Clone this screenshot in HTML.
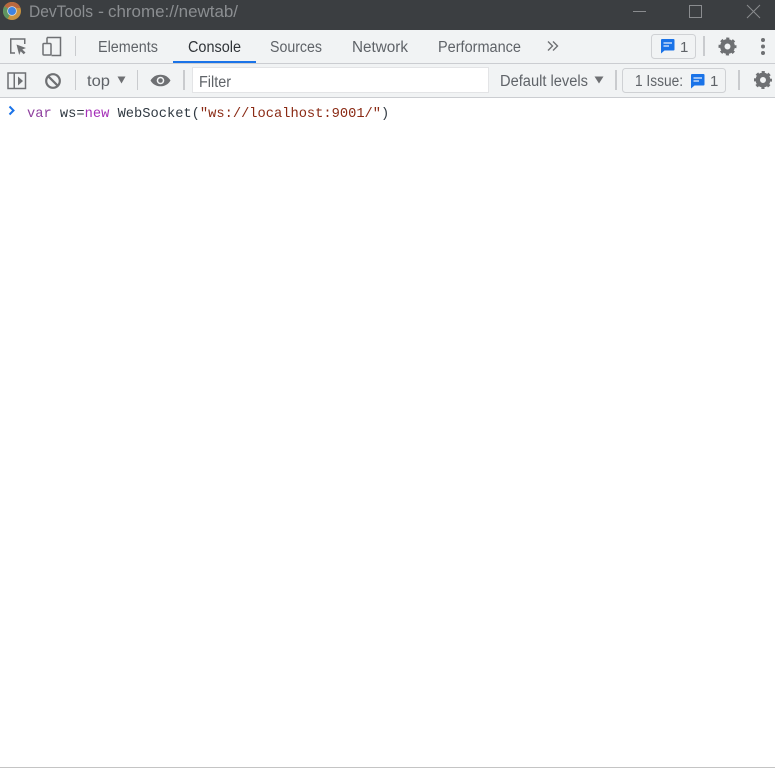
<!DOCTYPE html>
<html>
<head>
<meta charset="utf-8">
<style>
html,body{margin:0;padding:0;background:#fff;width:775px;height:768px;overflow:hidden}
svg{display:block;font-family:"Liberation Sans",sans-serif}
.mono{font-family:"Liberation Mono",monospace;font-size:13.73px}
</style>
</head>
<body>
<svg width="775" height="768" viewBox="0 0 775 768" xmlns="http://www.w3.org/2000/svg">
<defs>
<g id="gear">
<circle r="5.2" fill="none" stroke="#6e7073" stroke-width="4.400"/>
<circle r="7.700" fill="none" stroke="#6e7073" stroke-width="2.600" stroke-dasharray="3.050 3" stroke-dashoffset="1.525"/>
</g>
<g id="msg"><path fill="#1a73e8" d="M1 0h11.500a1 1 0 0 1 1 1v9.500a1 1 0 0 1-1 1H3.500L0 14.500V1a1 1 0 0 1 1-1z"/><path stroke="#c4daf8" stroke-width="1.500" d="M2.500 4h8.500M2.500 7h5.500"/></g>
</defs>

<!-- title bar -->
<rect width="775" height="30" fill="#3b3e41"/>
<circle cx="12" cy="11" r="9" fill="#c9933f"/>
<path d="M12 11L4.500 6.200A9 9 0 0 1 20.500 8H12z" fill="#b9683f"/>
<path d="M12 11L7.500 19A9 9 0 0 1 4.500 6.200z" fill="#5f9460"/>
<circle cx="12" cy="11" r="4.800" fill="#dfe1e3"/>
<circle cx="12" cy="11" r="4" fill="#3f84e0"/>
<g font-size="16.500" fill="#8b8e91">
<text x="29" y="17" textLength="64" lengthAdjust="spacingAndGlyphs">DevTools</text>
<text x="98" y="17" textLength="6" lengthAdjust="spacingAndGlyphs">-</text>
<text x="108" y="17" textLength="130" lengthAdjust="spacingAndGlyphs">chrome://newtab/</text>
</g>
<rect x="633" y="11" width="13" height="1" fill="#8a8c8f"/>
<rect x="689.500" y="5.500" width="12" height="12" fill="none" stroke="#8a8c8f"/>
<path d="M747 5l13 13M760 5l-13 13" stroke="#8a8c8f" stroke-width="1" fill="none"/>

<!-- tab bar -->
<rect y="30" width="775" height="33" fill="#f1f3f4"/>
<rect y="63" width="775" height="1" fill="#cbcdd1"/>
<path d="M15 53h-4.250v-14h14v5" fill="none" stroke="#6e7073" stroke-width="1.500"/>
<path d="M16.500 44.500l9.500 3.500-3.700 1.500 3.200 3-1.800 1.800-3-3-1.500 3.700z" fill="#6e7073"/>
<path d="M47 37.500h13.500v18h-9" fill="none" stroke="#6e7073" stroke-width="1.500"/>
<path d="M47 37.500v6" stroke="#6e7073" stroke-width="1.500"/>
<rect x="43" y="43.500" width="8" height="11.500" rx="1" fill="none" stroke="#6e7073" stroke-width="1.500"/>
<rect x="75" y="36" width="1" height="20" fill="#c9cbce"/>

<g font-size="15.500" fill="#5f6368">
<text x="98" y="52" textLength="60" lengthAdjust="spacingAndGlyphs">Elements</text>
<text x="188" y="52" fill="#303438" textLength="53" lengthAdjust="spacingAndGlyphs">Console</text>
<text x="270" y="52" textLength="52" lengthAdjust="spacingAndGlyphs">Sources</text>
<text x="352" y="52" textLength="56" lengthAdjust="spacingAndGlyphs">Network</text>
<text x="438" y="52" textLength="83" lengthAdjust="spacingAndGlyphs">Performance</text>
</g>
<rect x="173" y="61" width="83" height="2" fill="#1a73e8"/>
<path d="M548 41.500l4.500 4.500-4.500 4.500M553 41.500l4.500 4.500-4.500 4.500" fill="none" stroke="#6e7073" stroke-width="1.400"/>

<rect x="651.500" y="34.500" width="44" height="24" rx="3" fill="#f1f3f4" stroke="#cfd1d4"/>
<use href="#msg" x="661" y="39"/>
<text x="680" y="52" font-size="15" fill="#5f6368">1</text>
<rect x="703" y="36" width="2" height="20" fill="#c9cbce"/>
<use href="#gear" x="727.500" y="46.500"/>
<circle cx="763" cy="40" r="2" fill="#6e7073"/>
<circle cx="763" cy="46.500" r="2" fill="#6e7073"/>
<circle cx="763" cy="53" r="2" fill="#6e7073"/>

<!-- console toolbar -->
<rect y="64" width="775" height="33" fill="#f1f3f4"/>
<rect y="97" width="775" height="1" fill="#cbcdd1"/>
<rect x="8" y="73" width="17.500" height="15.500" fill="none" stroke="#6e7073" stroke-width="1.500"/>
<rect x="13.500" y="73" width="1.500" height="15.500" fill="#6e7073"/>
<path d="M18 76.500l5 4.500-5 4.500z" fill="#6e7073"/>
<circle cx="53" cy="81" r="6.800" fill="none" stroke="#6e7073" stroke-width="2.200"/>
<path d="M48.300 76.300l9.400 9.400" stroke="#6e7073" stroke-width="2.200"/>
<rect x="75" y="70" width="1" height="20" fill="#c9cbce"/>
<text x="87" y="86" font-size="15.500" fill="#5f6368" textLength="23" lengthAdjust="spacingAndGlyphs">top</text>
<path d="M117.500 76.500h8l-4 7z" fill="#6e7073"/>
<rect x="137" y="70" width="1" height="20" fill="#c9cbce"/>
<path d="M150.500 80.500c2.300-4 6-5.800 10-5.800s7.700 1.800 10 5.800c-2.300 4-6 5.800-10 5.800s-7.700-1.800-10-5.800z" fill="#6e7073"/>
<circle cx="160.500" cy="80.500" r="3.800" fill="#f1f3f4"/>
<circle cx="160.500" cy="80.500" r="2.300" fill="#6e7073"/>
<rect x="183" y="70" width="2" height="20" fill="#c9cbce"/>
<rect x="192.500" y="67.500" width="296" height="25" fill="#fff" stroke="#e3e4e6"/>
<text x="199" y="87" font-size="15.500" fill="#5f6368" textLength="32" lengthAdjust="spacingAndGlyphs">Filter</text>
<text x="500" y="86" font-size="15.500" fill="#5f6368" textLength="88" lengthAdjust="spacingAndGlyphs">Default levels</text>
<path d="M594.500 76.500h9l-4.500 7z" fill="#6e7073"/>
<rect x="615" y="70" width="2" height="20" fill="#c9cbce"/>
<rect x="622.500" y="68.500" width="103" height="24" rx="3" fill="#f1f3f4" stroke="#cfd1d4"/>
<text x="635" y="86" font-size="15.500" fill="#5f6368" textLength="48" lengthAdjust="spacingAndGlyphs">1 Issue:</text>
<use href="#msg" x="691" y="74"/>
<text x="710" y="86" font-size="15" fill="#5f6368">1</text>
<rect x="738" y="70" width="2" height="20" fill="#c9cbce"/>
<use href="#gear" x="763" y="80"/>

<!-- console line -->
<path d="M9.500 106.500l4 4-4 4" fill="none" stroke="#1a73e8" stroke-width="2"/>
<text class="mono" x="27" y="117" xml:space="preserve"><tspan fill="#8e3f9e">var</tspan><tspan fill="#303942"> ws=</tspan><tspan fill="#a52fb8">new</tspan><tspan fill="#303942"> WebSocket(</tspan><tspan fill="#8a2a14">"ws://localhost:9001/"</tspan><tspan fill="#303942">)</tspan></text>

<!-- bottom line -->
<rect y="767" width="775" height="1" fill="#c4c4c4"/>
</svg>
</body>
</html>
